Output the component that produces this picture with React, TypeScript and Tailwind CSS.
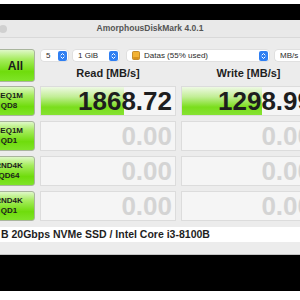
import type { ReactNode } from "react";

const font = { fontFamily: '"Liberation Sans", Arial, sans-serif' };

function Stepper() {
  return (
    <span className="flex h-[10px] w-[9px] shrink-0 items-center justify-center rounded-[2px] bg-[#2f7ff2]">
      <svg width="5" height="8" viewBox="0 0 5 8" fill="none" stroke="white" strokeWidth="1" strokeLinecap="round" strokeLinejoin="round">
        <path d="M1 3 L2.5 1.5 L4 3" />
        <path d="M1 5 L2.5 6.5 L4 5" />
      </svg>
    </span>
  );
}

function Select({ w, children, stepper = true }: { w: string; children: ReactNode; stepper?: boolean }) {
  return (
    <div
      className={`${w} flex h-[11px] shrink-0 items-center justify-between rounded-[3px] bg-white pl-[5px] pr-[1px] text-[8px] leading-none text-[#2a2a2a] shadow-[0_0_0_0.5px_#d4d4d4]`}
    >
      <span className="flex items-center gap-[4px] whitespace-nowrap">{children}</span>
      {stepper && <Stepper />}
    </div>
  );
}

function DriveIcon() {
  return (
    <svg width="8" height="9" viewBox="0 0 8 9">
      <rect x="0.5" y="0.5" width="7" height="8" rx="1" fill="#f3b233" stroke="#b67a12" strokeWidth="0.8" />
      <rect x="1.2" y="6" width="5.6" height="2" fill="#d8921c" />
    </svg>
  );
}

function TestButton({ top, bottom }: { top: string; bottom: string }) {
  return (
    <div className="flex h-[30px] flex-col items-center justify-center rounded-[3px] border border-[#a9b59d] bg-[linear-gradient(to_bottom,#dff8c8_0%,#a6ec5e_30%,#6fdc0c_70%,#7fe428_100%)] text-[8px] font-bold leading-[10px] text-[#1c1c1c]">
      <span>{top}</span>
      <span>{bottom}</span>
    </div>
  );
}

function ResultCell({ value, bar }: { value: string; bar?: string }) {
  const zero = value === "0.00";
  return (
    <div className="relative flex h-[30px] items-center justify-end overflow-hidden border border-[#dcdcdc] bg-[#f5f5f5] pr-[3px]">
      {bar && (
        <div
          className="absolute inset-y-0 left-0 bg-[linear-gradient(to_bottom,#eef9e4_0%,#c2ee96_35%,#7ade1c_72%,#86e232_100%)]"
          style={{ width: bar }}
        />
      )}
      <span className={`relative text-[26px] font-bold leading-none ${zero ? "text-[#d4d4d4]" : "text-[#1e1e1e]"}`}>
        {value}
      </span>
    </div>
  );
}

const rows = [
  { top: "SEQ1M", bottom: "QD8", read: "1868.72", readBar: "83px", write: "1298.99", writeBar: "80px" },
  { top: "SEQ1M", bottom: "QD1", read: "0.00", write: "0.00" },
  { top: "RND4K", bottom: "QD64", read: "0.00", write: "0.00" },
  { top: "RND4K", bottom: "QD1", read: "0.00", write: "0.00" },
];

export default function App() {
  return (
    <div className="flex h-[300px] w-[300px] flex-col overflow-hidden bg-white" style={font}>
      <div className="h-[4px] shrink-0 bg-white" />
      <div className="h-[16px] shrink-0 bg-black" />

      {/* window */}
      <div className="flex h-[18px] shrink-0 items-center border-b border-[#d9d9d9] bg-[#e9e9e9]">
        <span className="ml-[-1px] h-[8px] w-[8px] shrink-0 rounded-full bg-[#d0d0d0]" />
        <span className="flex-1 pr-[7px] text-center text-[8.5px] font-bold text-[#555]">AmorphousDiskMark 4.0.1</span>
      </div>

      <div className="flex h-[217px] shrink-0 flex-col bg-[#ececec] pt-[11px]">
        <div className="ml-[-17px] grid w-[333px] grid-cols-[52px_136px_135px] gap-x-[5px] gap-y-[5px]">
          <div className="flex h-[33px] items-center justify-center rounded-[3px] border border-[#a9b59d] bg-[linear-gradient(to_bottom,#dff8c8_0%,#a6ec5e_30%,#6fdc0c_70%,#7fe428_100%)] pl-[13px] text-[12px] font-bold text-[#1c1c1c]">
            All
          </div>
          <div className="col-span-2 flex h-[33px] flex-col pt-[1px]">
            <div className="flex items-center">
              <div className="ml-[1px]">
                <Select w="w-[27px]">5</Select>
              </div>
              <div className="ml-[5px]">
                <Select w="w-[46px]">1 GiB</Select>
              </div>
              <div className="ml-[8px]">
                <Select w="w-[142px]">
                  <DriveIcon />
                  Datas (55% used)
                </Select>
              </div>
              <div className="ml-[6px]">
                <Select w="w-[50px]" stepper={false}>
                  MB/s
                </Select>
              </div>
            </div>
            <div className="grid grid-cols-[136px_135px] gap-x-[5px] pt-[4px] text-[11px] font-bold text-[#1e1e1e]">
              <span className="text-center">Read [MB/s]</span>
              <span className="text-center">Write [MB/s]</span>
            </div>
          </div>

          {rows.map((r, i) => (
            <div key={i} className={`contents`}>
              <div className={i === 0 ? "mt-[-1px]" : ""}>
                <TestButton top={r.top} bottom={r.bottom} />
              </div>
              <div className={i === 0 ? "mt-[-1px]" : ""}>
                <ResultCell value={r.read} bar={r.readBar} />
              </div>
              <div className={i === 0 ? "mt-[-1px]" : ""}>
                <ResultCell value={r.write} bar={r.writeBar} />
              </div>
            </div>
          ))}
        </div>

        <div className="mt-[6px] flex h-[15px] items-center bg-white pl-[1px] text-[10.5px] font-bold text-[#1e1e1e] whitespace-nowrap">
          B 20Gbps NVMe SSD / Intel Core i3-8100B
        </div>
        <div className="flex-1" />
        <div className="h-[1px] bg-[#c4c4c4]" />
      </div>

      <div className="h-[36px] shrink-0 bg-black" />
      <div className="flex-1 bg-white" />
    </div>
  );
}
